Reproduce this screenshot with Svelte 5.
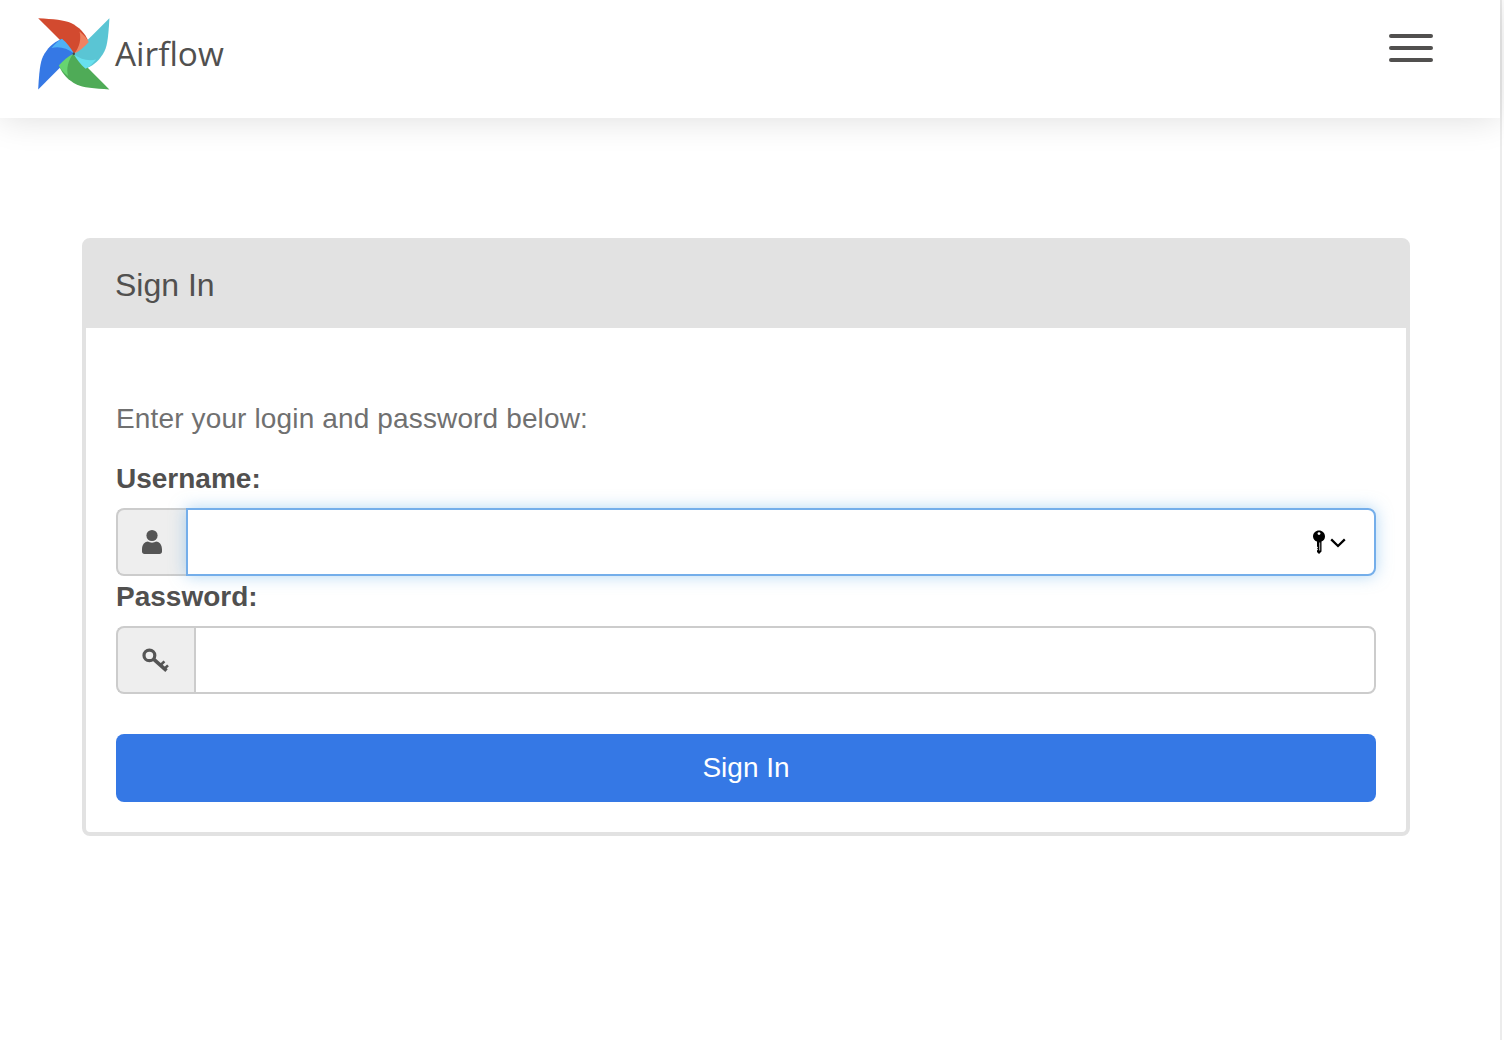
<script>
  const blades = [
    { angle: 0, dark: '#d24a2f', light: '#f08261' },
    { angle: 90, dark: '#5ac5d4', light: '#67e0ee' },
    { angle: 180, dark: '#4fab57', light: '#67d470' },
    { angle: 270, dark: '#3578e5', light: '#4fb1f6' }
  ];

  let username = '';
  let password = '';
</script>

<div class="page">
  <nav class="navbar">
    <a class="brand" href="#top">
      <svg class="logo" viewBox="0 0 72 72" width="72" height="72" aria-hidden="true">
        <!-- darks first, the lighter lobes sit on top of the next blade -->
        {#each blades as blade}
          <path
            transform="rotate({blade.angle} 35.8 35.8)"
            d="M0.2 0.2C15 1 27 2 33 5C41 9 47 15 50.5 23.5L36.3 35.8L35.8 35.8Z"
            fill={blade.dark}
          />
        {/each}
        {#each blades as blade}
          <path
            transform="rotate({blade.angle} 35.8 35.8)"
            d="M41.5 13.5C46 17 49 20.5 50.8 24C46.5 29 41.5 33 36.3 35.8C41.5 29 43.5 21 41.5 13.5Z"
            fill={blade.light}
          />
        {/each}
        <circle cx="35.8" cy="35.8" r="1.2" fill="#444" />
      </svg>
      <span class="brand-name">Airflow</span>
    </a>
    <button class="toggle" aria-label="Toggle navigation">
      <span></span>
      <span></span>
      <span></span>
    </button>
  </nav>

  <main class="container">
    <section class="card">
      <header class="card-title">Sign In</header>
      <form class="card-body" on:submit|preventDefault>
        <p class="hint">Enter your login and password below:</p>

        <label class="field-label" for="username">Username:</label>
        <div class="input-group focused">
          <span class="addon user-addon">
            <svg viewBox="0 0 22 26" width="22" height="26" aria-hidden="true">
              <circle cx="11" cy="6.5" r="5.6" fill="#555" />
              <path d="M1 20.5C1 15.5 4 12.6 7 12.6C9 14 13 14 15 12.6C18 12.6 21 15.5 21 20.5V22.5C21 24 20 25 18.5 25H3.5C2 25 1 24 1 22.5Z" fill="#555" />
            </svg>
          </span>
          <input id="username" type="text" bind:value={username} />
          <span class="keychain">
            <svg viewBox="0 0 14 24" width="14" height="24" aria-hidden="true">
              <path d="M7 0.5C10.3 0.5 13 3.1 13 6.4C13 8.8 11.5 10.7 9.5 11.6V21.5L7 24L5 22V20.5L6 19.5L5 18.5L6 17.5L5 16.5V11.6C3 10.8 1 8.8 1 6.4C1 3.1 3.7 0.5 7 0.5Z" fill="#000" />
              <circle cx="7" cy="3.6" r="1.4" fill="#fff" />
              <path d="M7.7 12.5V20.5" stroke="#fff" stroke-width="0.8" fill="none" />
            </svg>
            <svg class="chevron" viewBox="0 0 16 10" width="16" height="10" aria-hidden="true">
              <path d="M1.2 1.4L8 8L14.8 1.4" stroke="#000" stroke-width="2.3" fill="none" />
            </svg>
          </span>
        </div>

        <label class="field-label" for="password">Password:</label>
        <div class="input-group">
          <span class="addon key-addon">
            <svg viewBox="0 0 28 26" width="28" height="26" aria-hidden="true">
              <ellipse cx="7.4" cy="8.4" rx="5.4" ry="5.2" fill="none" stroke="#555" stroke-width="3.2" />
              <path d="M11 11.6L24.5 23.6" stroke="#555" stroke-width="3.6" fill="none" />
              <path d="M18.4 18.2L22.4 14.4M22.4 21.8L26 18.4" stroke="#555" stroke-width="2.6" fill="none" />
            </svg>
          </span>
          <input id="password" type="password" bind:value={password} />
        </div>

        <button class="submit" type="submit">Sign In</button>
      </form>
    </section>
  </main>
</div>

<style>
  :global(body) {
    background: #fff;
    font-family: "Liberation Sans", Arial, sans-serif;
    font-size: 28px;
    line-height: 40px;
    color: #51504f;
  }

  .page {
    width: 1500px;
    min-height: 1040px;
    box-sizing: content-box;
    border-right: 2px solid #ececec;
  }

  .navbar {
    height: 118px;
    box-sizing: border-box;
    padding: 18px 67px 0 38px;
    display: flex;
    justify-content: space-between;
    align-items: flex-start;
    background: #fff;
    box-shadow: 0 0 34px rgba(0, 0, 0, 0.14);
  }

  .brand {
    display: flex;
    align-items: center;
    gap: 5px;
    color: #51504f;
    text-decoration: none;
  }

  .logo {
    display: block;
  }

  .brand-name {
    font-family: "Open Sans", sans-serif;
    font-size: 33.4px;
    line-height: 70px;
    margin-bottom: 2px;
  }

  .toggle {
    display: flex;
    flex-direction: column;
    gap: 8px;
    width: 44px;
    margin-top: 16px;
    padding: 0;
    border: 0;
    background: none;
  }

  .toggle span {
    display: block;
    height: 4px;
    border-radius: 2px;
    background: #51504f;
  }

  .container {
    padding: 120px 90px 0 82px;
  }

  .card {
    border: 4px solid #e2e2e2;
    border-radius: 8px;
    background: #fff;
  }

  .card-title {
    height: 86px;
    padding: 0 29px;
    background: #e2e2e2;
    font-size: 32px;
    line-height: 86px;
  }

  .card-body {
    padding: 70px 30px 30px;
    margin: 0;
  }

  .hint {
    margin: 0 0 18px;
    color: #707070;
    line-height: 42px;
    letter-spacing: 0.14px;
  }

  .field-label {
    display: block;
    margin-bottom: 8px;
    font-weight: 700;
    line-height: 42px;
  }

  .input-group {
    position: relative;
    display: flex;
    height: 68px;
  }

  .addon {
    display: flex;
    align-items: center;
    justify-content: center;
    box-sizing: border-box;
    flex: none;
    background: #eee;
    border: 2px solid #ccc;
    border-right: 0;
    border-radius: 8px 0 0 8px;
  }

  .user-addon {
    width: 70px;
  }

  .key-addon {
    width: 78px;
  }

  .input-group input {
    flex: 1;
    min-width: 0;
    box-sizing: border-box;
    margin: 0;
    padding: 12px 24px;
    border: 2px solid #ccc;
    border-radius: 0 8px 8px 0;
    background: #fff;
    font: inherit;
    color: #555;
    outline: none;
  }

  .focused input {
    border-color: #74aeea;
    box-shadow: 0 0 16px rgba(102, 175, 233, 0.5);
  }

  .keychain {
    position: absolute;
    top: 22px;
    right: 30px;
    display: flex;
    align-items: center;
    gap: 4px;
  }

  .keychain svg {
    display: block;
  }

  .keychain .chevron {
    margin-top: 2px;
  }

  .submit {
    display: block;
    width: 100%;
    height: 68px;
    margin-top: 40px;
    padding: 0;
    border: 0;
    border-radius: 8px;
    background: #3578e5;
    color: #fff;
    font: inherit;
    line-height: 68px;
  }
</style>
